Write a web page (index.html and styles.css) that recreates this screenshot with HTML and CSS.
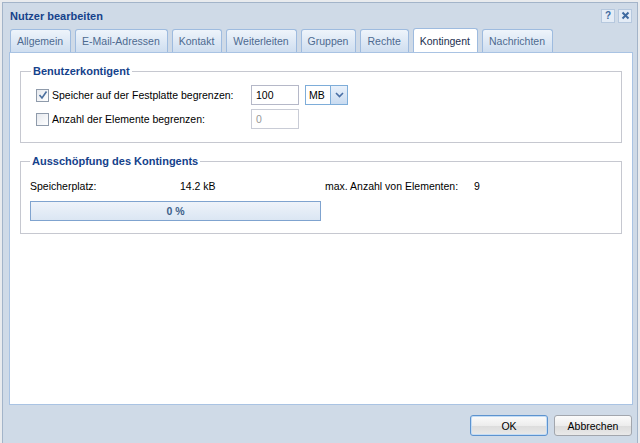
FILE: index.html
```html
<!DOCTYPE html>
<html lang="de">
<head>
  <meta charset="UTF-8">
  <title>Nutzer bearbeiten</title>
  <link rel="stylesheet" href="styles.css">
</head>
<body>
  <div class="fenster">
    <div class="kopf">
      <span class="titel">Nutzer bearbeiten</span>
      <span class="werkzeuge">
        <span class="werkzeug">?</span>
        <span class="werkzeug">
          <svg width="9" height="9" viewBox="0 0 9 9"><path d="M1.5 1.5 L7.5 7.5 M7.5 1.5 L1.5 7.5" stroke="#3f6aa0" stroke-width="2"/></svg>
        </span>
      </span>
    </div>

    <div class="reiter">
      <span class="reiter-tab">Allgemein</span>
      <span class="reiter-tab">E-Mail-Adressen</span>
      <span class="reiter-tab">Kontakt</span>
      <span class="reiter-tab">Weiterleiten</span>
      <span class="reiter-tab">Gruppen</span>
      <span class="reiter-tab">Rechte</span>
      <span class="reiter-tab aktiv">Kontingent</span>
      <span class="reiter-tab">Nachrichten</span>
    </div>

    <div class="inhalt">
      <fieldset class="gruppe">
        <legend>Benutzerkontigent</legend>
        <div class="zeile">
          <label class="wahl"><span class="kasten an"><svg width="10" height="10" viewBox="0 0 10 10"><path d="M1.5 5 L4 8 L8.5 1.5" fill="none" stroke="#4b6f9e" stroke-width="1.6"/></svg></span>Speicher auf der Festplatte begrenzen:</label>
          <span class="feld">100</span>
          <span class="combo"><span class="combo-text">MB</span><span class="combo-knopf"><svg width="9" height="6" viewBox="0 0 9 6"><path d="M1 1 L4.5 4.5 L8 1" fill="none" stroke="#4a6fa5" stroke-width="1.6"/></svg></span></span>
        </div>
        <div class="zeile">
          <label class="wahl"><span class="kasten"></span>Anzahl der Elemente begrenzen:</label>
          <span class="feld gesperrt">0</span>
        </div>
      </fieldset>

      <fieldset class="gruppe zwei">
        <legend>Ausschöpfung des Kontingents</legend>
        <div class="werte">
          <span>Speicherplatz:</span>
          <span>14.2 kB</span>
          <span>max. Anzahl von Elementen:</span>
          <span>9</span>
        </div>
        <div class="balken">0 %</div>
      </fieldset>
    </div>

    <div class="knoepfe">
      <button class="knopf fokus">OK</button>
      <button class="knopf">Abbrechen</button>
    </div>
  </div>
</body>
</html>
```

FILE: styles.css
```css
body {
  margin: 0;
  padding: 2px 0 0 2px;
  background: #e9ebee;
  font-family: "Liberation Sans", Arial, sans-serif;
  font-size: 10.5px;
  color: #000;
  overflow: hidden;
}

.fenster {
  width: 636px;
  height: 460px;
  background: #cfdae7;
  border: 1px solid #a3b4c9;
  padding: 0 4px 0 6px;
  box-sizing: border-box;
}

.kopf {
  display: flex;
  justify-content: space-between;
  align-items: center;
  height: 25px;
  padding: 0 1px 0 1px;
}

.titel {
  font-weight: bold;
  color: #15428b;
  font-size: 11px;
}

.werkzeuge {
  display: flex;
  gap: 3px;
}

.werkzeug {
  width: 12px;
  height: 12px;
  background: #e4ecf6;
  border: 1px solid #b6c8de;
  color: #3f6aa0;
  font-weight: bold;
  font-size: 10px;
  display: flex;
  align-items: center;
  justify-content: center;
  line-height: 1;
}

.reiter {
  display: flex;
  gap: 4px;
  padding-left: 1px;
  height: 23px;
  margin-top: 1px;
  position: relative;
  z-index: 1;
}

.reiter-tab {
  padding: 0 7px 0 6px;
  height: 23px;
  box-sizing: border-box;
  display: flex;
  align-items: center;
  border: 1px solid #9ebbdf;
  border-bottom: none;
  border-radius: 3px 3px 0 0;
  background: linear-gradient(to bottom, #eef4fb, #cfdef0);
  color: #4d6a90;
}

.reiter-tab.aktiv {
  background: #fff;
  color: #1c2f4f;
  height: 24px;
  margin-top: -1px;
}

.inhalt {
  background: #fff;
  border: 1px solid #a9c3e3;
  height: 353px;
  box-sizing: border-box;
  padding: 12px 10px 0;
}

.gruppe {
  margin: 0 0 12px;
  border: 1px solid #c6c8d0;
  padding: 8px 9px 13px 10px;
}

.gruppe legend {
  color: #15428b;
  font-weight: bold;
  font-size: 11px;
  padding: 0 2px;
  margin-left: 0;
}

.zeile {
  display: flex;
  align-items: center;
  height: 20px;
  margin-bottom: 4px;
}

.zeile:last-child {
  margin-bottom: 0;
}

.wahl {
  width: 220px;
  display: flex;
  align-items: center;
  padding-left: 5px;
  box-sizing: border-box;
}

.kasten {
  width: 11px;
  height: 11px;
  border: 1px solid #8f9bab;
  background: linear-gradient(to bottom right, #e6e9ee, #fff);
  margin-right: 3px;
  display: flex;
  align-items: center;
  justify-content: center;
}

.feld {
  width: 48px;
  height: 20px;
  box-sizing: border-box;
  border: 1px solid #b5b8c8;
  padding: 0 4px;
  display: flex;
  align-items: center;
}

.feld.gesperrt {
  color: #999;
  border-color: #c9ccd6;
}

.combo {
  display: flex;
  margin-left: 6px;
  height: 20px;
}

.combo-text {
  width: 26px;
  box-sizing: border-box;
  border: 1px solid #7eadd9;
  padding: 0 3px;
  display: flex;
  align-items: center;
}

.combo-knopf {
  width: 17px;
  box-sizing: border-box;
  border: 1px solid #7eadd9;
  border-left: none;
  background: linear-gradient(to bottom, #e9f1fb, #c9dbf0);
  display: flex;
  align-items: center;
  justify-content: center;
}

.zwei {
  padding: 12px 9px 12px 9px;
}

.werte {
  display: grid;
  grid-template-columns: 150px 145px 149px auto;
  height: 14px;
  align-items: center;
  margin-bottom: 8px;
}

.balken {
  width: 291px;
  height: 20px;
  box-sizing: border-box;
  border: 1px solid #7fa3cf;
  background: linear-gradient(to bottom, #eef3fa, #dbe6f3);
  color: #3d5f8a;
  font-weight: bold;
  display: flex;
  align-items: center;
  justify-content: center;
}

.knoepfe {
  display: flex;
  justify-content: flex-end;
  gap: 6px;
  padding-top: 10px;
  padding-right: 1px;
}

.knopf {
  width: 78px;
  height: 21px;
  font-family: "Liberation Sans", Arial, sans-serif;
  font-size: 10.5px;
  color: #000;
  border: 1px solid #a2a6ad;
  border-radius: 3px;
  background: linear-gradient(to bottom, #fbfbfb 0, #ededed 50%, #dcdcdc 51%, #e9e9e9 100%);
  padding: 0;
}

.knopf.fokus {
  border-color: #5d93cf;
  box-shadow: inset 0 0 0 1px #c3dcf5;
}
```
